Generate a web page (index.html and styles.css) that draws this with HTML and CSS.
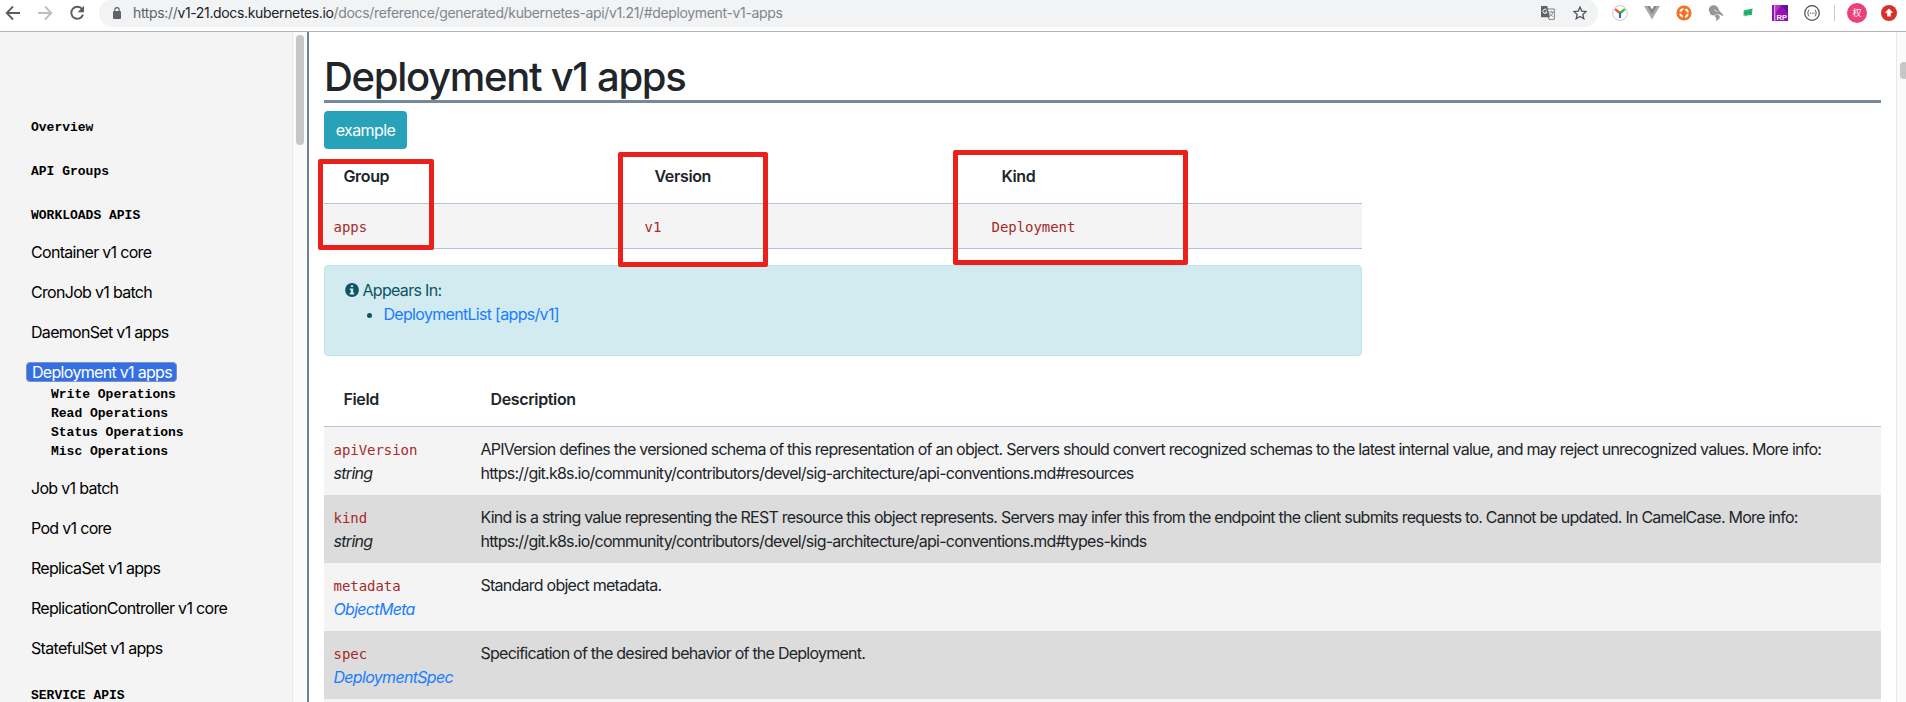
FILE: index.html
```html
<!DOCTYPE html>
<html lang="en">
<head>
<meta charset="utf-8">
<title>Deployment v1 apps</title>
<link rel="stylesheet" href="styles.css">
</head>
<body>
<header class="toolbar">
  <nav class="nav-buttons">
    <svg width="16" height="16" viewBox="0 0 16 16" fill="none" stroke="#5a5d61" stroke-width="1.8"><path d="M15 8H2M8 1.5 1.7 8 8 14.5"/></svg>
    <svg width="16" height="16" viewBox="0 0 16 16" fill="none" stroke="#bcbec0" stroke-width="1.8"><path d="M1 8h13M8 1.5 14.3 8 8 14.5"/></svg>
    <svg width="16" height="16" viewBox="0 0 16 16" fill="none" stroke="#5a5d61" stroke-width="1.9"><path d="M13.2 4.2A6 6 0 1 0 14 9.6"/><path d="M15 .8v6.4H8.6z" fill="#5a5d61" stroke="none"/></svg>
  </nav>
  <div class="omnibox">
    <svg class="lock" width="8" height="12" viewBox="0 0 8 12"><rect y="4" width="8" height="8" rx="1" fill="#5f6368"/><path d="M1.8 4.5V2.8a2.2 2.2 0 0 1 4.4 0v1.7" fill="none" stroke="#5f6368" stroke-width="1.1"/></svg>
    <span class="url"><span class="scheme">https://</span><span class="host">v1-21.docs.kubernetes.io</span>/docs/reference/generated/kubernetes-api/v1.21/#deployment-v1-apps</span>
    <svg class="translate" width="14" height="14" viewBox="0 0 14 14"><path d="M5 3h8.3v10.3H8z" fill="#fff" stroke="#6b6e72" stroke-width=".9"/><path d="M0 0h6.2L9 11.2H0z" fill="#5f6368"/><path d="M5.8 4.2A2.1 2.1 0 1 0 6 6H4.2" fill="none" stroke="#fff"/><path d="M8 6h4.8M10.4 4.8V6M12 6c-.3 2-1.8 3.5-3 4.3M9 7.3c.5 1.3 1.8 2.6 3.2 3.3" fill="none" stroke="#6b6e72" stroke-width=".8"/></svg>
    <svg class="star" width="14" height="14" viewBox="0 0 14 14"><path d="m7 1 1.7 4.1 4.4.4-3.3 2.9 1 4.3L7 10.4l-3.8 2.3 1-4.3L.9 5.5l4.4-.4z" fill="none" stroke="#505357" stroke-width="1.3"/></svg>
  </div>
  <div class="extensions">
    <svg width="16" height="16" viewBox="0 0 16 16"><circle cx="8" cy="8" r="7.4" fill="#fff" stroke="#c4c4c4" stroke-width=".9"/><g fill="none" stroke-width="2.2"><path d="M8 8 3 4.2" stroke="#f4511e"/><path d="m8 8 5-3.8" stroke="#3fb82b"/><path d="M8 7.5V13" stroke="#2a6ad9"/></g></svg>
    <svg width="16" height="16" viewBox="0 0 16 16"><path d="M0 1h4l4 7 4-7h4L8 14.6z" fill="#ababab"/><path d="M3.2 1H6l2 3.4L10 1h2.8L8 9.3z" fill="#858585"/></svg>
    <svg width="16" height="16" viewBox="0 0 16 16"><circle cx="8" cy="8" r="7.6" fill="#f37224"/><circle cx="8" cy="8" r="4" fill="none" stroke="#fff" stroke-width="2" stroke-dasharray="4.2 2.083" transform="rotate(15 8 8)"/></svg>
    <svg width="16" height="16" viewBox="0 0 16 16"><path d="M.6 5C.8 2 3 .3 5.6.3c3 0 5 2 5.2 5L15.4 10l-1.2 1-2.2-1.4-4.6-.2-1.6 1-3-.6z" fill="#969696"/><path d="M6 4.6 9.6 7" stroke="#e6e6e6"/><path d="M6.4 10.4 9 9.8l2.6 1v2.6l-3 2.4-1-.8 1-1.2z" fill="#969696"/></svg>
    <svg width="16" height="16" viewBox="0 0 16 16"><path d="m3.8 5.2 8.8-1.6-.8 6.4-5 .6-1.6 1.2-.2-1.2H3.4z" fill="#28b76f"/><path d="M5.4 8h1.5M8.6 7.4h2" stroke="#13834c"/></svg>
    <svg width="16" height="16" viewBox="0 0 16 16"><path d="M0 0h16v16H0z" fill="#9610b2"/><path d="M9 0h7v8z" fill="#5a1797"/><path d="M4 0h5L4 7z" fill="#bd35d0"/><path d="M2.8 0v16" stroke="#f6ddfb"/><text class="rp" x="4.6" y="14.6">RP</text></svg>
    <svg width="16" height="16" viewBox="0 0 16 16" fill="none" stroke="#4b4b4b"><circle cx="8" cy="8" r="7.3" stroke-width="1.2"/><path d="M5.2 4.8c-1.8.3-.3 2.7-1.8 3.2 1.5.5 0 2.9 1.8 3.2M10.8 4.8c1.8.3.3 2.7 1.8 3.2-1.5.5 0 2.9-1.8 3.2"/><path d="M6 8.2h4.5" stroke-dasharray="1 .8"/></svg>
  </div>
  <span class="divider"></span>
  <span class="avatar">权</span>
  <svg class="update" width="16" height="16" viewBox="0 0 16 16"><circle cx="8" cy="8" r="8" fill="#d93025"/><path d="m8 3.4 4.2 4.4H9.8v3.6H6.2V7.8H3.8z" fill="#fff"/></svg>
</header>
<div class="page">
  <aside class="sidebar">
    <ul class="toc">
      <li class="section">Overview</li>
      <li class="section">API Groups</li>
      <li class="section section-open">WORKLOADS APIS</li>
      <li class="entry">Container v1 core</li>
      <li class="entry">CronJob v1 batch</li>
      <li class="entry">DaemonSet v1 apps</li>
      <li class="entry entry-active"><a>Deployment v1 apps</a>
        <ul class="operations">
          <li>Write Operations</li><li>Read Operations</li><li>Status Operations</li><li>Misc Operations</li>
        </ul>
      </li>
      <li class="entry">Job v1 batch</li>
      <li class="entry">Pod v1 core</li>
      <li class="entry">ReplicaSet v1 apps</li>
      <li class="entry">ReplicationController v1 core</li>
      <li class="entry">StatefulSet v1 apps</li>
      <li class="section section-next">SERVICE APIS</li>
    </ul>
  </aside>
  <div class="track side-track"><span class="thumb"></span></div>
  <main class="content">
    <h1>Deployment v1 apps</h1>
    <button class="example">example</button>
    <table class="gvk">
      <thead><tr><th class="mark mark-group">Group</th><th class="mark mark-version">Version</th><th class="mark mark-kind">Kind</th></tr></thead>
      <tbody><tr><td><code>apps</code></td><td><code>v1</code></td><td><code>Deployment</code></td></tr></tbody>
    </table>
    <div class="alert">
      <div class="alert-title"><svg width="14" height="14" viewBox="0 0 14 14"><circle cx="7" cy="7" r="6.9" fill="#0c5460"/><path d="M5.9 2.2h2.2v1.9H5.9zM4.8 5.4h3.4v4.4h1v1.6H4.8V9.8h1V7h-1z" fill="#d1ebf0"/></svg>Appears In:</div>
      <ul><li><a>DeploymentList [apps/v1]</a></li></ul>
    </div>
    <table class="fields">
      <thead><tr><th>Field</th><th>Description</th></tr></thead>
      <tbody>
        <tr><td><code>apiVersion</code><br><em>string</em></td><td>APIVersion defines the versioned schema of this representation of an object. Servers should convert recognized schemas to the latest internal value, and may reject unrecognized values. More info:<br>https://git.k8s.io/community/contributors/devel/sig-architecture/api-conventions.md#resources</td></tr>
        <tr><td><code>kind</code><br><em>string</em></td><td>Kind is a string value representing the REST resource this object represents. Servers may infer this from the endpoint the client submits requests to. Cannot be updated. In CamelCase. More info:<br>https://git.k8s.io/community/contributors/devel/sig-architecture/api-conventions.md#types-kinds</td></tr>
        <tr><td><code>metadata</code><br><em><a>ObjectMeta</a></em></td><td>Standard object metadata.</td></tr>
        <tr><td><code>spec</code><br><em><a>DeploymentSpec</a></em></td><td>Specification of the desired behavior of the Deployment.</td></tr>
        <tr><td></td><td></td></tr>
      </tbody>
    </table>
  </main>
  <div class="track page-track"><span class="thumb"></span></div>
</div>
</body>
</html>
```
FILE: styles.css
```css
*, ::after { box-sizing: border-box; }
body {
  margin: 0;
  height: 702px;
  overflow: hidden;
  display: flex;
  flex-direction: column;
  background: #fff;
  color: #212529;
  font: 16px/24px Inter, sans-serif;
  letter-spacing: -0.69px;
  white-space: nowrap;
}
ul { list-style: none; margin: 0; padding: 0; }
svg { display: block; flex: none; }
a { color: #1a7dff; }

/* Browser toolbar */
.toolbar {
  flex: none;
  height: 32px;
  display: flex;
  align-items: center;
  padding: 0 9px 5px 5px;
  border-bottom: 1px solid #b4b4b4;
}
.nav-buttons { display: flex; gap: 16px; width: 94px; }
.omnibox {
  width: 1499px;
  height: 28px;
  margin-top: -1px;
  display: flex;
  align-items: center;
  padding: 0 11px 0 14px;
  border-radius: 14px;
  background: #f1f3f4;
}
.url { flex: 1; margin-left: 12px; font-size: 14px; letter-spacing: -0.35px; color: #80868b; }
.scheme { color: #5f6368; }
.host { color: #202124; }
.star { margin-left: 18px; }
.extensions { display: flex; gap: 16px; margin-left: 14px; }
.rp { font: bold 7.5px "Liberation Sans", sans-serif; letter-spacing: 0; fill: #fff; }
.divider { width: 1px; height: 16px; margin-left: 14px; background: #c8cacd; }
.avatar {
  width: 20px;
  height: 20px;
  margin: 0 14px 0 12px;
  border-radius: 50%;
  background: #ec407a;
  color: #fff;
  font: 9px/20px "Noto Sans CJK SC", sans-serif;
  letter-spacing: 0;
  text-align: center;
}

/* Page columns */
.page { flex: 1; min-height: 0; display: flex; }
.sidebar {
  width: 292px;
  padding: 73.5px 0 0 31px;
  overflow: hidden;
  background: #f4f4f4;
  color: #000;
}
.track { flex: none; background: #fafafa; border-left: 1px solid #e8e8e8; }
.thumb { display: block; background: #c6c6c6; }
.side-track { width: 17px; padding: 3px 0 0 3px; border-right: 2px solid #708090; }
.side-track .thumb { width: 8px; height: 110px; border-radius: 4px; }
.page-track { width: 10px; padding: 30px 0 0 3px; overflow: hidden; }
.page-track .thumb { width: 8px; height: 17px; border-radius: 4px; }

.section {
  height: 44px;
  font: bold 13px/44px "Liberation Mono", monospace;
  letter-spacing: 0;
}
.section-open { height: 38.5px; }
.section-next { margin-top: 6px; }
.entry { line-height: 40px; }
.entry-active { padding-top: 10px; line-height: 20px; }
.entry-active a {
  display: block;
  width: 151px;
  height: 20px;
  margin-left: -5px;
  padding-left: 5px;
  border: 1px solid #7f93b8;
  border-radius: 4px;
  background: #3470e4;
  color: #fff;
  line-height: 18px;
}
.operations {
  margin: 3px 0 7px;
  padding-left: 20px;
  font: bold 13px/19px "Liberation Mono", monospace;
  letter-spacing: 0;
}

/* Resource documentation */
.content { flex: 1; min-width: 0; padding: 20px 15px 0; overflow: hidden; }
h1 {
  margin: 0 0 8px;
  padding-top: 1px;
  border-bottom: 3px solid #778899;
  font-size: 40px;
  font-weight: 500;
  line-height: 47px;
  letter-spacing: -1.3px;
}
.example {
  display: block;
  width: 83px;
  height: 38px;
  padding: 0;
  border: 0;
  border-radius: 4px;
  background: #28a2b8;
  color: #fff;
  font: inherit;
  letter-spacing: -0.6px;
}
table { border-collapse: separate; border-spacing: 0; table-layout: fixed; text-align: left; }
th { padding: 0 19.5px; font-weight: 600; letter-spacing: -0.36px; border-bottom: 1px solid #b0c4de; }
td { padding: 10px 9.5px; vertical-align: top; }
code { font: 14px "DejaVu Sans Mono", monospace; letter-spacing: -0.04px; color: #a52a2a; }
.gvk { width: 1038px; margin-bottom: 16px; }
.gvk th { height: 55px; position: relative; }
.gvk td { background: #f4f4f4; border-bottom: 1px solid #b0c4de; }
.gvk th:nth-child(1) { width: 311px; }
.gvk th:nth-child(2) { width: 347px; }

/* Red highlight frames laid over the table */
.mark::after {
  content: "";
  position: absolute;
  border: 5px solid #ea211b;
  border-radius: 2px;
}
.mark-group::after { left: -6px; top: 10px; width: 116px; height: 91px; }
.mark-version::after { left: -17px; top: 3px; width: 150px; height: 115px; }
.mark-kind::after { left: -29px; top: 1px; width: 235px; height: 115px; }

.alert {
  width: 1038px;
  height: 91px;
  padding: 12px 19.5px;
  border: 1px solid #bee5eb;
  border-radius: 4px;
  background: #d1ebf0;
  color: #0c5460;
}
.alert-title { display: flex; align-items: center; gap: 4px; }
.alert ul { padding-left: 39px; list-style: disc; }

.fields { width: 1557px; margin-top: 16px; }
.fields th { height: 55px; }
.fields th:first-child { width: 147px; }
.fields tr { background: #f4f4f4; }
.fields thead tr { background: none; }
.fields tbody tr { height: 68px; }
.fields tbody tr:nth-child(even) { background: #dcdcdc; }
.fields td:last-child { letter-spacing: -0.755px; }
```
